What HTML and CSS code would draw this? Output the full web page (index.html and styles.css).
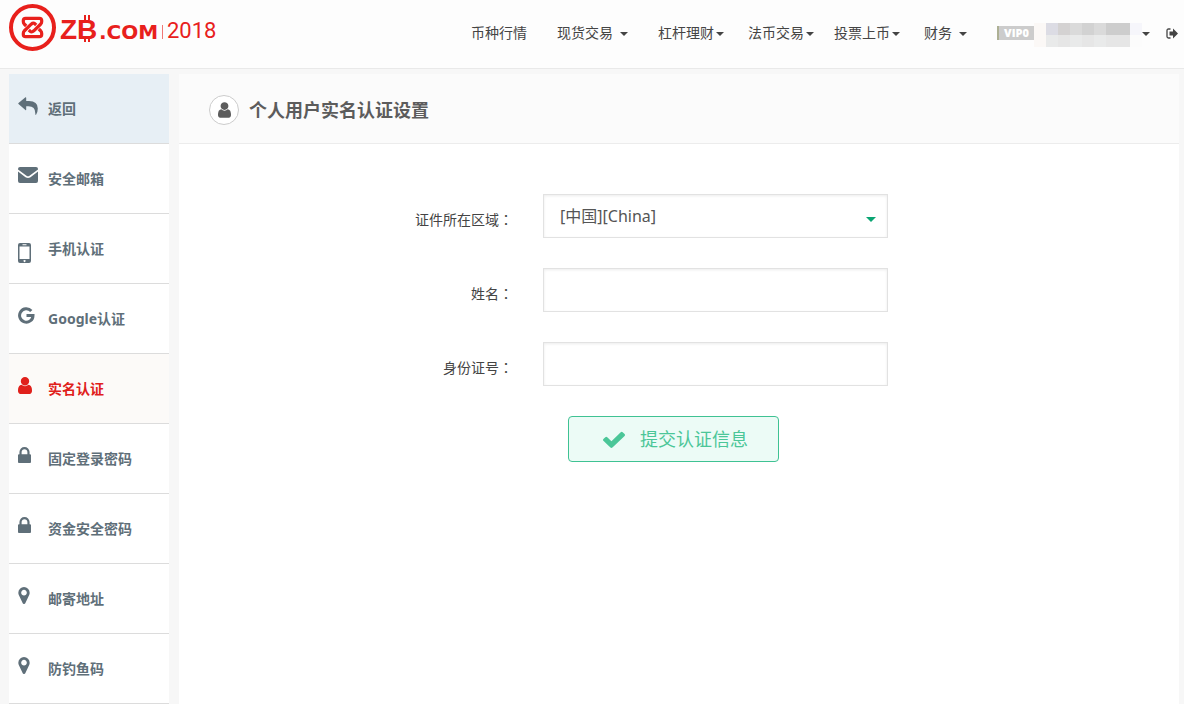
FILE: index.html
```html
<!DOCTYPE html>
<html lang="zh-CN">
<head>
<meta charset="utf-8">
<meta name="viewport" content="width=device-width, initial-scale=1">
<title>个人用户实名认证设置</title>
<link rel="stylesheet" href="styles.css">
</head>
<body>
<svg class="defs" width="0" height="0" aria-hidden="true">
  <symbol id="caret" viewBox="0 0 8 4"><path d="M0 0h8L4 4z"/></symbol>
  <symbol id="user" viewBox="256 128 1280 1536"><path d="M1536 1399q0 109-62.5 187t-150.5 78h-854q-88 0-150.5-78t-62.5-187q0-85 8.5-160.5t31.5-152 58.5-131 94-89 134.5-34.5q131 128 313 128t313-128q76 0 134.5 34.5t94 89 58.5 131 31.5 152 8.5 160.5zm-256-887q0 159-112.5 271.5t-271.5 112.5-271.5-112.5-112.5-271.5 112.5-271.5 271.5-112.5 271.5 112.5 112.5 271.5z"/></symbol>
  <symbol id="lock" viewBox="320 128 1152 1408"><path d="M640 768h512v-192q0-106-75-181t-181-75-181 75-75 181v192zm832 96v576q0 40-28 68t-68 28h-960q-40 0-68-28t-28-68v-576q0-40 28-68t68-28h32v-192q0-184 132-316t316-132 316 132 132 316v192h32q40 0 68 28t28 68z"/></symbol>
  <symbol id="pin" viewBox="384 128 1024 1536"><path d="M1152 640q0-106-75-181t-181-75-181 75-75 181 75 181 181 75 181-75 75-181zm256 0q0 109-33 179l-364 774q-16 33-47.5 52t-67.5 19-67.5-19-46.5-52l-365-774q-33-70-33-179 0-212 150-362t362-150 362 150 150 362z"/></symbol>
</svg>

<header class="topbar">
  <a class="logo" href="#" aria-label="ZB.COM 2018">
    <svg width="210" height="52" viewBox="0 0 210 52">
      <circle cx="23.500" cy="27.500" r="21.500" fill="none" stroke="#e8201c" stroke-width="4"/>
      <g fill="none" stroke="#e8201c" stroke-width="3.200" stroke-linejoin="round">
        <path d="M17.200 26L15.200 24Q14.300 23 14.300 21.500V20.500Q14.300 18.300 16.600 18.300H30.400Q32.700 18.300 32.700 20.500V21.500Q32.700 23 31.800 24L24.800 30.800Q22.800 32.600 21 31.200L19.800 30"/>
        <path d="M29.800 29L31.800 31Q32.700 32 32.700 33.500V34.500Q32.700 36.700 30.400 36.700H16.600Q14.300 36.700 14.300 34.500V33.500Q14.300 32 15.200 31L22.200 24.200Q24.200 22.400 26 23.800L27.200 25"/>
      </g>
      <g fill="#e8201c">
        <text class="logo-zb" x="51" y="39">ZB</text>
        <path d="M75 15h2v5h-2zM79 15h2v5h-2zM75 38h2v4h-2zM79 38h2v4h-2z"/>
        <text class="logo-com" x="90" y="39">.COM</text>
        <path d="M153 25h1v14h-1z" opacity=".6"/>
        <text class="logo-year" x="158" y="38">2018</text>
      </g>
    </svg>
  </a>
  <nav class="menu">
    <a href="#">币种行情</a>
    <a class="wide" href="#">现货交易<svg class="caret far"><use href="#caret"/></svg></a>
    <a class="wide" href="#">杠杆理财<svg class="caret"><use href="#caret"/></svg></a>
    <a class="mid" href="#">法币交易<svg class="caret"><use href="#caret"/></svg></a>
    <a href="#">投票上币<svg class="caret"><use href="#caret"/></svg></a>
    <a class="mid" href="#">财务<svg class="caret far"><use href="#caret"/></svg></a>
  </nav>
  <a class="account" href="#" aria-label="账户">
    <span class="vip">VIP0</span>
    <span class="masked">
      <i class="m0"></i><i class="m1"></i><i class="m2"></i><i class="m3"></i><i class="m4"></i><i class="m3"></i><i class="m5"></i><i class="m5"></i><i class="m6"></i>
      <i class="m0"></i><i class="m7"></i><i class="m8"></i><i class="m7"></i><i class="m8"></i><i class="m7"></i><i class="m8"></i><i class="m8"></i><i class="m9"></i>
    </span>
    <svg class="caret"><use href="#caret"/></svg>
  </a>
  <a class="logout" href="#" aria-label="退出">
    <svg width="12" height="11" viewBox="0 0 12 11"><path d="M4.500 1H2.500Q1 1 1 2.500v6Q1 10 2.500 10H4.500" fill="none" stroke="#444" stroke-width="1.300"/><path d="M3.500 3.500h3.500V.5L12 5.500l-5 5v-3H3.500z" fill="#444"/></svg>
  </a>
</header>

<div class="page">
  <nav class="side">
    <a class="back" href="#"><span class="icon"><svg width="20" height="18" viewBox="0 0 20 18"><path d="M7.500.3Q8.200 0 8.200.9V4H11Q19.800 4 19.800 11.500Q19.800 14.500 18.200 17.600Q17.600 18.300 17.300 17.300Q17.700 9.300 10.500 9.300H8.200V12.500Q8.200 13.500 7.400 12.900L.5 7Q0 6.500.5 6z"/></svg></span>返回</a>
    <a href="#"><span class="icon"><svg width="20" height="16" viewBox="0 0 20 16"><path d="M2 0h16q2 0 2 2v.5L11.500 8.800q-1.500 1-3 0L0 2.500V2Q0 0 2 0zM0 4.500l7.500 5.700q2.500 1.600 5 0L20 4.500V14q0 2-2 2H2q-2 0-2-2z"/></svg></span>安全邮箱</a>
    <a href="#"><span class="icon low"><svg width="13" height="20" viewBox="0 0 13 20"><path fill-rule="evenodd" d="M2 0h9q2 0 2 2v16q0 2-2 2H2q-2 0-2-2V2Q0 0 2 0zM1.500 3.500v12.500h10V3.500zM4.500 1.300v.9h4v-.9zM6.500 17a1 1 0 1 0 .1 0z"/></svg></span>手机认证</a>
    <a href="#"><span class="icon"><svg width="17" height="17" viewBox="0 0 17 17"><path d="M13.300 4A6.700 6.700 0 1 0 15 8.600H8.500" fill="none" stroke="currentColor" stroke-width="3"/></svg></span>Google认证</a>
    <a class="current" href="#" aria-current="page"><span class="icon"><svg width="14" height="17"><use href="#user"/></svg></span>实名认证</a>
    <a href="#"><span class="icon"><svg width="13" height="16"><use href="#lock"/></svg></span>固定登录密码</a>
    <a href="#"><span class="icon"><svg width="13" height="16"><use href="#lock"/></svg></span>资金安全密码</a>
    <a href="#"><span class="icon"><svg width="12" height="17"><use href="#pin"/></svg></span>邮寄地址</a>
    <a href="#"><span class="icon"><svg width="12" height="17"><use href="#pin"/></svg></span>防钓鱼码</a>
  </nav>

  <main class="panel">
    <div class="panel-head">
      <span class="badge"><svg width="13" height="16"><use href="#user"/></svg></span>
      <h1>个人用户实名认证设置</h1>
    </div>
    <form class="form">
      <div class="row">
        <label for="region">证件所在区域<span class="colon" lang="ja">：</span></label>
        <div class="control">
          <select id="region"><option>[中国][China]</option></select>
          <svg class="caret arrow"><use href="#caret"/></svg>
        </div>
      </div>
      <div class="row">
        <label for="name">姓名<span class="colon" lang="ja">：</span></label>
        <div class="control"><input id="name" type="text"></div>
      </div>
      <div class="row">
        <label for="idno">身份证号<span class="colon" lang="ja">：</span></label>
        <div class="control"><input id="idno" type="text"></div>
      </div>
      <div class="actions">
        <button type="button"><svg width="22" height="17" viewBox="121 270 1550 1252" preserveAspectRatio="none"><path d="M1671 566q0 40-28 68l-724 724-136 136q-28 28-68 28t-68-28l-136-136-362-362q-28-28-28-68t28-68l136-136q28-28 68-28t68 28l294 295 656-657q28-28 68-28t68 28l136 136q28 28 28 68z"/></svg>提交认证信息</button>
      </div>
    </form>
  </main>
</div>
</body>
</html>
```
FILE: styles.css
```css
* { box-sizing: border-box; }

body {
  margin: 0;
  min-height: 100vh;
  display: flex;
  flex-direction: column;
  background: #f7f7f7;
  color: #444;
  font: 14px/20px "Noto Sans", "Noto Sans CJK SC", sans-serif;
}

a { color: inherit; text-decoration: none; }
svg { display: block; fill: currentColor; }
.defs { position: absolute; }

/* Top bar */
.topbar {
  display: flex;
  align-items: center;
  height: 69px;
  padding: 0 6px 2px 9px;
  background: #fdfdfd;
  border-bottom: 1px solid #e9e9e9;
}
.logo { align-self: flex-start; margin-right: auto; }
.logo-zb { font: bold 28px "Liberation Sans", sans-serif; }
.logo-com { font: bold 20px "DejaVu Sans", sans-serif; }
.logo-year { font: 400 22px Roboto, sans-serif; }

.menu { display: flex; gap: 20px; }
.menu a { display: flex; align-items: center; white-space: nowrap; }
.menu .wide { margin-left: 10px; }
.menu .mid { margin-left: 4px; }

.caret { width: 8px; height: 4px; margin: 2px 0 0 2px; }
.caret.far { margin-left: 7px; }

.account { display: flex; align-items: center; margin-left: 30px; }
.vip {
  width: 37px;
  padding-left: 5px;
  border-left: 2px solid #adb094;
  background: #ccc;
  color: #fff;
  font-family: "Open Sans", sans-serif;
  font-size: 11px;
  font-weight: 800;
  line-height: 14px;
}
.masked {
  display: grid;
  grid-template-columns: repeat(9, 12px);
  grid-template-rows: repeat(2, 12px);
  margin: 3px -2px 0 0;
}
.m0 { background: #fbf8f6; }
.m1 { background: #dcdce4; }
.m2 { background: #d4d2d2; }
.m3 { background: #dadada; }
.m4 { background: #d2d2d2; }
.m5 { background: #cdcdcd; }
.m6 { background: #f6f6fb; }
.m7 { background: #e9eaea; }
.m8 { background: #e6e6e6; }
.m9 { background: #fcfcfc; }
.logout { margin-left: 16px; }

/* Body columns */
.page {
  flex: 1;
  display: flex;
  gap: 10px;
  padding: 5px 5px 0 9px;
}

.side { flex: 0 0 160px; color: #5f6f79; font-weight: bold; line-height: 24px; }
.side a {
  display: flex;
  height: 70px;
  padding: 23px 0 0 9px;
  background: #fff;
  border-bottom: 1px solid #dcdcdc;
}
.side .back { background: #e7eff5; }
.side .current { background: #fcfaf8; color: #e0201b; }
.icon { width: 30px; }
.icon.low { padding-top: 6px; }

.panel { flex: 1; min-width: 0; background: #fff; }
.panel-head {
  display: flex;
  align-items: center;
  gap: 10px;
  height: 70px;
  padding: 2px 30px 0;
  background: #fbfbfb;
  border-bottom: 1px solid #ececec;
  color: #5c5c5c;
}
.badge {
  display: grid;
  place-items: center;
  width: 30px;
  height: 30px;
  border: 1px solid #ccc;
  border-radius: 50%;
  background: #fff;
}
h1 { margin: 0; font-size: 18px; line-height: 26px; }

/* Form */
.form { display: grid; gap: 30px; padding: 50px 0; }
.row { display: flex; gap: 30px; }
.row label {
  width: 33.4%;
  padding-top: 15px;
  text-align: right;
}
.colon { font-family: "Noto Sans CJK JP", sans-serif; }
.control { position: relative; width: 345px; }
.control input,
.control select {
  display: block;
  width: 100%;
  height: 44px;
  padding: 0 16px;
  border: 1px solid #e2e2e2;
  border-radius: 0;
  background: #fff;
  box-shadow: inset 0 1px 3px rgba(0, 0, 0, .08);
  color: #555;
  font: inherit;
  font-size: 16px;
  appearance: none;
}
.arrow { position: absolute; top: 21px; right: 12px; width: 10px; height: 5px; color: #0aa573; }

.actions { padding-left: calc(33.4% + 55px); }
.actions button {
  display: flex;
  align-items: center;
  justify-content: center;
  gap: 15px;
  width: 211px;
  height: 46px;
  padding: 0 4px 0 8px;
  border: 1px solid #3fc293;
  border-radius: 4px;
  background: #ecfbf6;
  color: #4bc698;
  font: inherit;
  font-size: 18px;
}
```
